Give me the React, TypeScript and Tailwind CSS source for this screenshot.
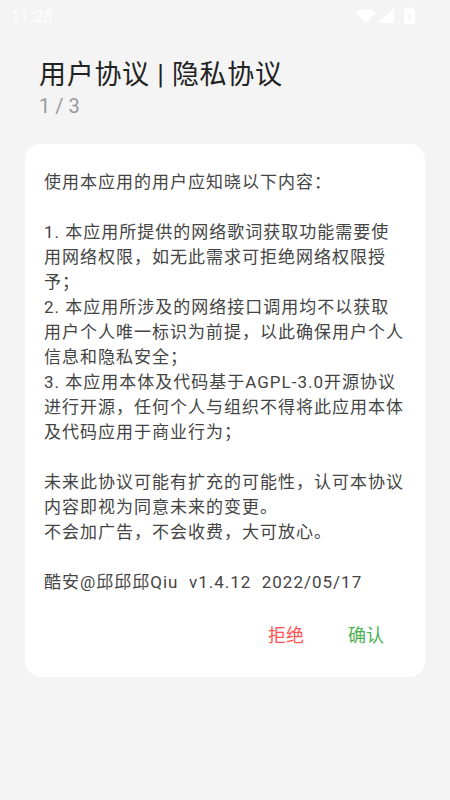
const font = { fontFamily: "Roboto, 'Noto Sans CJK SC', sans-serif" };

const lines = [
	"使用本应用的用户应知晓以下内容：",
	"",
	"1. 本应用所提供的网络歌词获取功能需要使",
	"用网络权限，如无此需求可拒绝网络权限授",
	"予；",
	"2. 本应用所涉及的网络接口调用均不以获取",
	"用户个人唯一标识为前提，以此确保用户个人",
	"信息和隐私安全；",
	"3. 本应用本体及代码基于AGPL-3.0开源协议",
	"进行开源，任何个人与组织不得将此应用本体",
	"及代码应用于商业行为；",
	"",
	"未来此协议可能有扩充的可能性，认可本协议",
	"内容即视为同意未来的变更。",
	"不会加广告，不会收费，大可放心。",
	"",
];

function StatusBar() {
	return (
		<div className="flex h-[30px] items-center justify-between pl-[11px] pr-[35px] text-white">
			<span className="mt-[3px] text-[16px] leading-none tracking-[0.5px]">11:28</span>
			<div className="flex items-center gap-[2px]">
				<svg width="20" height="15" viewBox="0 0 20 15" fill="#fff">
					<path d="M0 4.500C2.800 2 6.200 1 10 1s7.200 1 10 3.500L10 15z" />
				</svg>
				<svg width="16" height="15" viewBox="0 0 16 15" fill="#fff" className="mr-[8px]">
					<path d="M16 0v15H0z" />
				</svg>
				<svg width="11" height="17" viewBox="0 0 11 17" fill="#fff">
					<path d="M3.500 0h4v2H10a1 1 0 0 1 1 1v13a1 1 0 0 1-1 1H1a1 1 0 0 1-1-1V3a1 1 0 0 1 1-1h2.500z" />
					<path d="M6.300 4 3 10h2v4l3.200-6H6z" fill="#f4f4f4" />
				</svg>
			</div>
		</div>
	);
}

export default function App() {
	return (
		<div className="h-[800px] w-[450px] bg-[#f4f4f4]" style={font}>
			<StatusBar />
			<div className="px-[39px] pt-[27px]">
				<h1 className="text-[27px] font-normal leading-[37px] tracking-[0.7px] text-[#222222]">
					用户协议 | 隐私协议
				</h1>
				<p className="text-[20px] leading-[24px] text-[#999999]">1 / 3</p>
			</div>
			<div className="mx-[25px] mt-[26px] h-[533px] rounded-[16px] bg-white px-[19px] pt-[26px]">
				<div className="text-[17px] leading-[25px] tracking-[1px] text-[#444444]">
					{lines.map((line, i) => (
						<div key={i} className="h-[25px] whitespace-nowrap">
							{line}
						</div>
					))}
					<div className="whitespace-pre">酷安@邱邱邱Qiu  v1.4.12  2022/05/17</div>
				</div>
				<div className="mt-[29px] flex justify-end gap-[44px] pr-[22px] text-[18px] leading-[24px]">
					<button className="text-[#ff5252]">拒绝</button>
					<button className="text-[#4caf50]">确认</button>
				</div>
			</div>
		</div>
	);
}
